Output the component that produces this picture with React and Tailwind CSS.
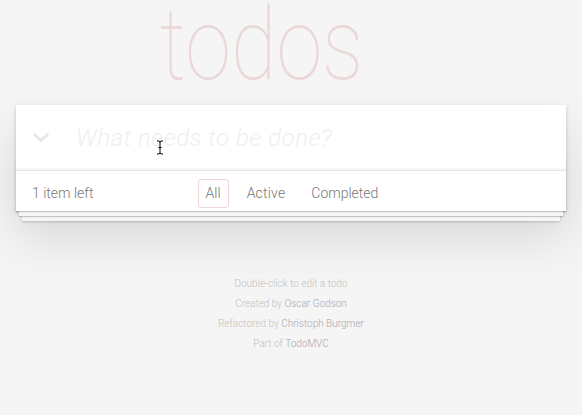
import React from "react";

export default function App() {
  return (
    <div className="isolate min-h-screen bg-[#f5f5f5] font-['Roboto',sans-serif] font-light text-[14px] text-[#4d4d4d] relative overflow-hidden">
      <div className="max-w-[550px] mx-auto">
        <div className="h-[105px] flex items-start justify-center pr-[58px]">
          <h1 className="font-['Roboto',sans-serif] font-thin text-[100px] leading-[80px] text-[#ead7d7] mt-[5px] scale-x-[0.83]">
            todos
          </h1>
        </div>
        <section className="relative bg-white shadow-[0_2px_4px_0_rgba(0,0,0,0.2),0_25px_50px_0_rgba(0,0,0,0.13)]">
          <header className="relative h-[65px] flex items-center shadow-[inset_0_-2px_1px_rgba(0,0,0,0.03)]">
            <div className="w-[60px] flex justify-start pl-[17px]">
              <svg width="16" height="10" viewBox="0 0 16 10" className="mt-[1px]">
                <polyline points="2,2 8,7.5 14,2" fill="none" stroke="#e8e8e8" strokeWidth="3" strokeLinecap="square" />
              </svg>
            </div>
            <span className="italic font-light text-[24px] text-[#efefef] leading-none tracking-[0.5px]">
              What needs to be done?
            </span>
          </header>
          <footer className="relative border-t border-[#e6e6e6] h-[41px] px-[15px] pt-[5px] flex items-center text-[#777]">
            <div className="pointer-events-none absolute left-0 right-0 bottom-0 h-[50px] shadow-[0_1px_1px_rgba(0,0,0,0.2),0_8px_0_-3px_#f6f6f6,0_9px_1px_-3px_rgba(0,0,0,0.2),0_16px_0_-6px_#f6f6f6,0_17px_2px_-6px_rgba(0,0,0,0.2)]" />
            <span className="relative pl-[1px]">1 item left</span>
            <ul className="absolute left-0 right-0 top-[5px] bottom-0 flex items-center justify-center gap-[10px] pl-[2px]">
              <li>
                <a className="block px-[7px] py-[3px] border border-[rgba(175,47,47,0.2)] rounded-[3px]">All</a>
              </li>
              <li>
                <a className="block px-[7px] py-[3px] border border-transparent rounded-[3px] tracking-[0.2px]">Active</a>
              </li>
              <li>
                <a className="block px-[7px] py-[3px] border border-transparent rounded-[3px]">Completed</a>
              </li>
            </ul>
          </footer>
        </section>
        <div className="mt-[68px] flex flex-col items-center gap-[10px] text-[10px] leading-none text-[#bfbfbf]">
          <p>Double-click to edit a todo</p>
          <p>
            Created by <span className="text-[#a8a8a8]">Oscar Godson</span>
          </p>
          <p>
            Refactored by <span className="text-[#a8a8a8]">Christoph Burgmer</span>
          </p>
          <p>
            Part of <span className="text-[#a8a8a8]">TodoMVC</span>
          </p>
        </div>
      </div>
      <svg className="absolute left-[156px] top-[140px]" width="8" height="15" viewBox="0 0 8 15">
        <path d="M1 1 H3 L4 2 L5 1 H7 M4 2 V13 M1 14 H3 L4 13 L5 14 H7 M2.5 7.5 H5.5" fill="none" stroke="#fff" strokeWidth="2.5" />
        <path d="M1 1 H3 L4 2 L5 1 H7 M4 2 V13 M1 14 H3 L4 13 L5 14 H7 M2.5 7.5 H5.5" fill="none" stroke="#000" strokeWidth="1" />
      </svg>
    </div>
  );
}
